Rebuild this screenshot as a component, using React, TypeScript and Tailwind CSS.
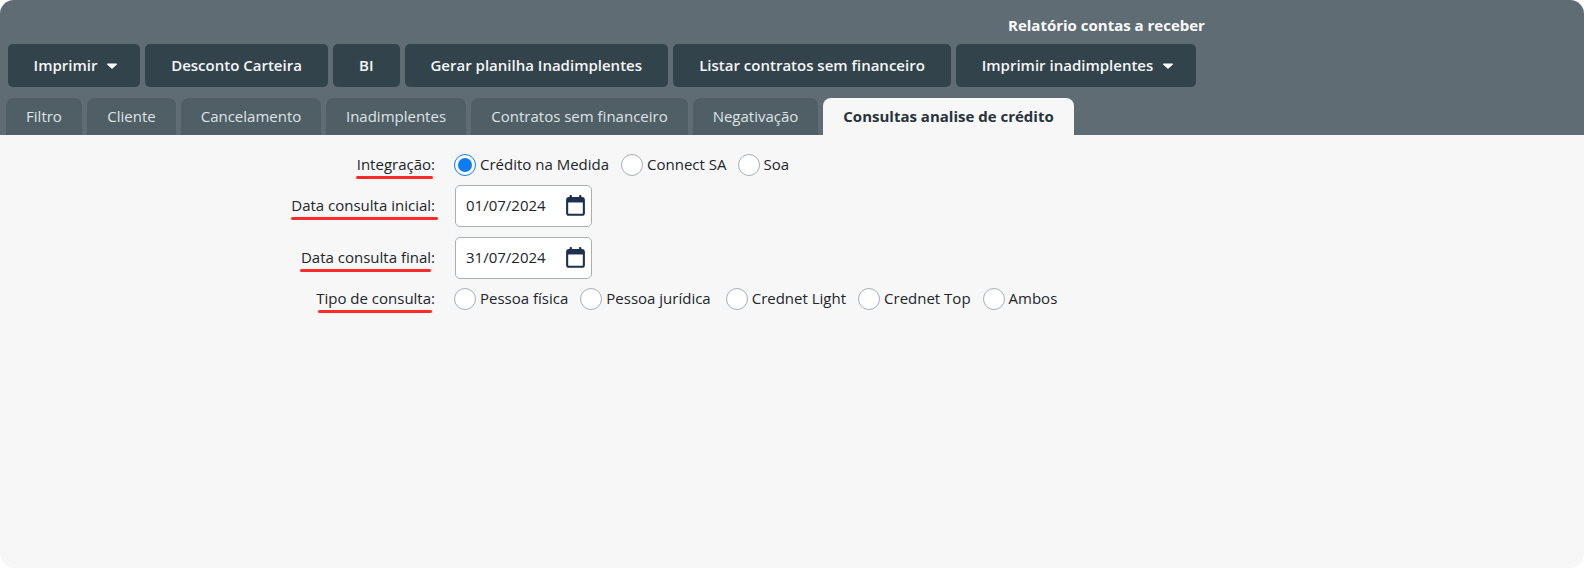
import React from 'react';

const buttons = [
  { label: 'Imprimir', caret: true, w: 'w-[132px]' },
  { label: 'Desconto Carteira', w: 'w-[183px]' },
  { label: 'BI', w: 'w-[66.5px]' },
  { label: 'Gerar planilha Inadimplentes', w: 'w-[263.5px]' },
  { label: 'Listar contratos sem financeiro', w: 'w-[278px]' },
  { label: 'Imprimir inadimplentes', caret: true, w: 'w-[240px]' },
];

const tabs = [
  { label: 'Filtro', w: 'w-[76px]' },
  { label: 'Cliente', w: 'w-[89px]' },
  { label: 'Cancelamento', w: 'w-[140px]' },
  { label: 'Inadimplentes', w: 'w-[140px]' },
  { label: 'Contratos sem financeiro', w: 'w-[217px]' },
  { label: 'Negativação', w: 'w-[125px]' },
];

const Caret = () => (
  <svg width="12" height="6" viewBox="0 0 11 6" className="ml-[9px]">
    <path d="M1 0.5h9a.6.6 0 0 1 .4 1L6 5.5a.7.7 0 0 1-1 0L.6 1.5a.6.6 0 0 1 .4-1z" fill="#ffffff" />
  </svg>
);

const CalendarIcon = () => (
  <svg width="19" height="21" viewBox="0 0 20 22" className="mb-[2px] ml-auto">
    <path d="M5 1v4M15 1v4" stroke="#1e2f4f" strokeWidth="2.4" strokeLinecap="round" />
    <rect x="1.2" y="3.2" width="17.6" height="17.6" rx="2" fill="none" stroke="#1e2f4f" strokeWidth="2.2" />
    <rect x="1.2" y="3.2" width="17.6" height="4.6" fill="#1e2f4f" />
  </svg>
);

const Radio = ({ label, checked, mr }: { label: string; checked?: boolean; mr: string }) => (
  <label className={`flex items-center ${mr}`}>
    <span
      className={`flex h-[22px] w-[22px] items-center justify-center rounded-full border bg-white ${
        checked ? 'border-[#0d7bf2]' : 'border-[#a6afb6]'
      }`}
    >
      {checked && <span className="h-[14px] w-[14px] rounded-full bg-[#0d7bf2]" />}
    </span>
    <span className="ml-[4px] pb-[2px]">{label}</span>
  </label>
);

const Label = ({ text, line }: { text: string; line: string }) => (
  <span className="relative w-[435px] shrink-0 pb-[2px] text-right">
    {text}
    <span className={`absolute h-[3px] rounded-full bg-[#ff2a2a] ${line}`} />
  </span>
);

const DateField = ({ value }: { value: string }) => (
  <div className="ml-[20px] flex h-[42px] w-[137px] items-center rounded-[5px] border border-[#a6afb6] bg-white pl-[10px] pr-[6px]">
    <span className="pb-[2px]">{value}</span>
    <CalendarIcon />
  </div>
);

export default function App() {
  return (
    <div className="flex h-[568px] w-[1584px] flex-col overflow-hidden rounded-[14px] bg-[#f7f7f7] font-['Open_Sans',sans-serif] text-[15px] text-[#212529]">
      <header className="flex h-[135px] flex-col bg-[#5f6c73]">
        <div className="flex h-[44px] items-end pb-[8px] pl-[1008px] text-[15px] font-bold text-[#fafafa]">
          Relatório contas a receber
        </div>
        <div className="flex gap-[5px] pl-[8px]">
          {buttons.map((b) => (
            <button
              key={b.label}
              className={`flex h-[43px] items-center justify-center rounded-[5px] bg-[#32434b] font-semibold text-[#f5f6f6] ${b.caret ? 'pl-[4px]' : ''} ${b.w}`}
            >
              {b.label}
              {b.caret && <Caret />}
            </button>
          ))}
        </div>
        <div className="mt-[11px] flex gap-[5px] pl-[6px]">
          {tabs.map((t) => (
            <div
              key={t.label}
              className={`flex h-[37px] items-center justify-center rounded-t-[8px] bg-[#505e66] text-[#dfe3e5] ${t.w}`}
            >
              {t.label}
            </div>
          ))}
          <div className="flex h-[37px] w-[251px] items-center justify-center rounded-t-[8px] bg-[#f7f7f7] font-bold text-[#27333b]">
            Consultas analise de crédito
          </div>
        </div>
      </header>

      <main className="flex flex-col pt-[19px]">
        <div className="flex h-[22px] items-center">
          <Label text="Integração:" line="left-[356px] right-[2px] top-[23px]" />
          <div className="ml-[19px] flex">
            <Radio label="Crédito na Medida" checked mr="mr-[12px]" />
            <Radio label="Connect SA" mr="mr-[11px]" />
            <Radio label="Soa" mr="" />
          </div>
        </div>
        <div className="mt-[9px] flex items-center">
          <Label text="Data consulta inicial:" line="left-[291px] right-[-3px] top-[23px]" />
          <DateField value="01/07/2024" />
        </div>
        <div className="mt-[10px] flex items-center">
          <Label text="Data consulta final:" line="left-[300px] right-[4px] top-[23px]" />
          <DateField value="31/07/2024" />
        </div>
        <div className="mt-[9px] flex h-[22px] items-center">
          <Label text="Tipo de consulta:" line="left-[318px] right-[3px] top-[23px]" />
          <div className="ml-[19px] flex">
            <Radio label="Pessoa física" mr="mr-[12px]" />
            <Radio label="Pessoa jurídica" mr="mr-[15px]" />
            <Radio label="Crednet Light" mr="mr-[12px]" />
            <Radio label="Crednet Top" mr="mr-[12px]" />
            <Radio label="Ambos" mr="" />
          </div>
        </div>
      </main>
    </div>
  );
}
